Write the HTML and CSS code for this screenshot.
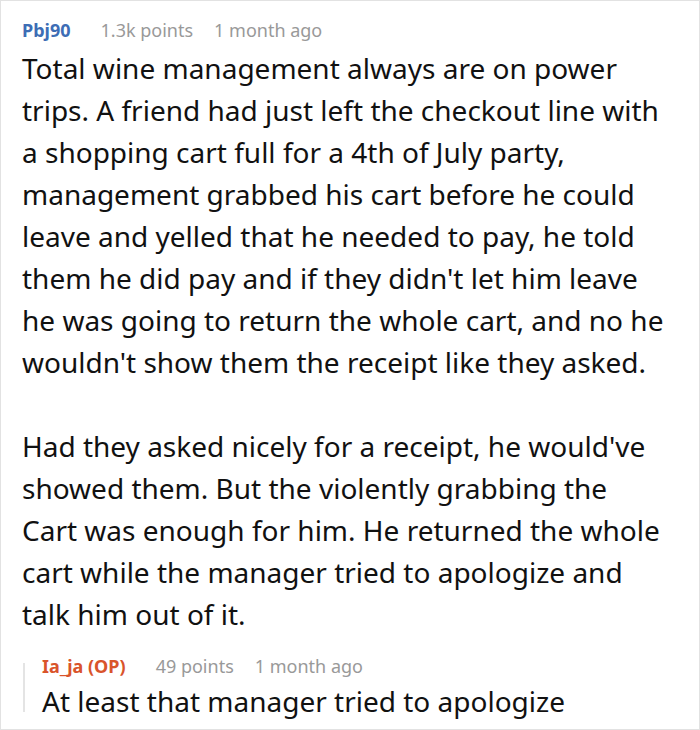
FILE: index.html
```html
<!DOCTYPE html>
<html>
<head>
<meta charset="utf-8">
<link rel="stylesheet" href="styles.css">
</head>
<body>
<div class="frame">
  <div class="comment">
    <div class="meta">
      <span class="author">Pbj90</span>
      <span class="info">1.3k points</span>
      <span class="info">1 month ago</span>
    </div>
    <div class="text">
      <p>Total wine management always are on power trips. A friend had just left the checkout line with a shopping cart full for a 4th of July party, management grabbed his cart before he could leave and yelled that he needed to pay, he told them he did pay and if they didn't let him leave he was going to return the whole cart, and no he wouldn't show them the receipt like they asked.</p>
      <p>Had they asked nicely for a receipt, he would've showed them. But the violently grabbing the Cart was enough for him. He returned the whole cart while the manager tried to apologize and talk him out of it.</p>
    </div>
    <div class="reply">
      <div class="meta">
        <span class="author op">Ia_ja (OP)</span>
        <span class="info">49 points</span>
        <span class="info">1 month ago</span>
      </div>
      <div class="text">
        <p>At least that manager tried to apologize</p>
      </div>
    </div>
  </div>
</div>
</body>
</html>
```

FILE: styles.css
```css
html, body {
  margin: 0;
  padding: 0;
  background: #ffffff;
}
body {
  font-family: "Noto Sans", "Open Sans", sans-serif;
}
.frame {
  width: 698px;
  height: 728px;
  border: 1px solid #e2e2e2;
  overflow: hidden;
}
.comment {
  padding: 15px 32px 0 21px;
}
.meta {
  display: flex;
  gap: 21px;
  font-size: 18px;
  line-height: 28px;
  align-items: baseline;
  margin-bottom: 3px;
}
.author {
  font-weight: 700;
  color: #3d6db5;
  margin-right: 9px;
}
.author.op {
  color: #d9542b;
}
.info {
  color: #999999;
}
.text {
  font-size: 28px;
  line-height: 42px;
  color: #111111;
}
.text p {
  margin: 0;
}
.text p + p {
  margin-top: 42px;
}
.reply {
  position: relative;
  margin-top: 17px;
  padding-left: 20px;
}
.reply::before {
  content: "";
  position: absolute;
  left: 1px;
  top: 11px;
  bottom: 10px;
  width: 2px;
  background: #e4e4e4;
}
.reply .meta {
  margin-bottom: 0;
}
```
